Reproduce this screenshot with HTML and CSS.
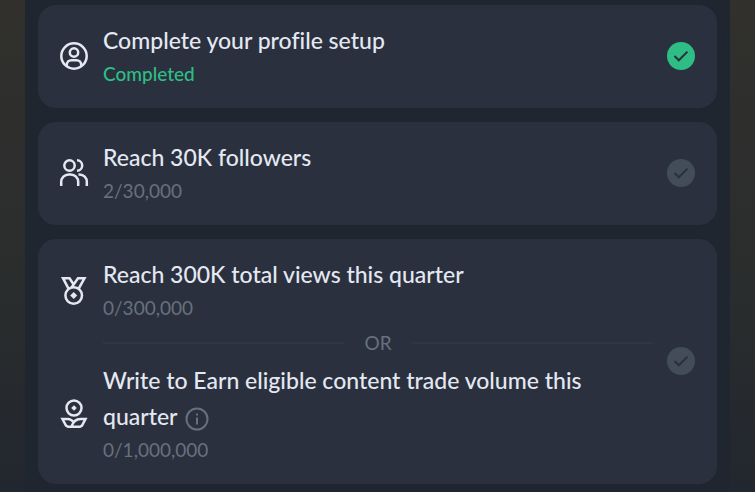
FILE: index.html
```
<!DOCTYPE html>
<html lang="en">
<head>
    <meta charset="UTF-8">
    <meta name="viewport" content="width=device-width, initial-scale=1.0">
    <title>Creator Tasks</title>
    <link rel="stylesheet" href="styles.css">
</head>
<body>
    <main class="panel">
        <section class="card">
            <div class="tasks">
                <div class="task">
                    <svg class="icon" viewBox="0 0 28 28">
                        <circle cx="14" cy="14" r="12.7"/>
                        <circle cx="14" cy="10.5" r="4.2"/>
                        <path d="M6.8 24v-1.200c0-2.800 2-4.600 4.700-4.600h5c2.700 0 4.700 1.800 4.700 4.600V24"/>
                    </svg>
                    <div class="task-text">
                        <h2>Complete your profile setup</h2>
                        <p class="completed">Completed</p>
                    </div>
                </div>
            </div>
            <svg class="check done" viewBox="0 0 28 28" role="img" aria-label="Done">
                <circle cx="14" cy="14" r="14"/>
                <path d="M7.500 14l4.300 4.300 8.700-8.700"/>
            </svg>
        </section>

        <section class="card">
            <div class="tasks">
                <div class="task">
                    <svg class="icon" viewBox="0 0 28 28">
                        <circle cx="9.500" cy="6.500" r="5.200"/>
                        <path d="M17 1.300a5.200 5.200 0 0 1 0 10.400"/>
                        <path d="M1.200 27v-4a7.500 7.500 0 0 1 7.500-7.500h2A7.500 7.500 0 0 1 18.200 23v4"/>
                        <path d="M18.500 15.500h1a7.300 7.300 0 0 1 7.300 7.500v4"/>
                    </svg>
                    <div class="task-text">
                        <h2>Reach 30K followers</h2>
                        <p>2/30,000</p>
                    </div>
                </div>
            </div>
            <svg class="check" viewBox="0 0 28 28" role="img" aria-label="Not done">
                <circle cx="14" cy="14" r="14"/>
                <path d="M7.500 14l4.300 4.300 8.700-8.700"/>
            </svg>
        </section>

        <section class="card">
            <div class="tasks">
                <div class="task">
                    <svg class="icon" viewBox="0 0 28 28">
                        <circle cx="13.700" cy="19.500" r="8.300"/>
                        <path d="M8.500 12.700L3 2.200h6.500l4.200 6.300M11.500 11.500l6.500-9.300h6.500l-5.800 10.500"/>
                        <path class="solid" d="M13.700 16l3.500 3.500-3.500 3.500-3.500-3.500z"/>
                    </svg>
                    <div class="task-text">
                        <h2>Reach 300K total views this quarter</h2>
                        <p>0/300,000</p>
                    </div>
                </div>
                <div class="divider">OR</div>
                <div class="task">
                    <svg class="icon" viewBox="0 0 28 28">
                        <circle cx="14" cy="8" r="7.500"/>
                        <path class="solid" d="M14 5.200l2.800 2.800-2.800 2.800-2.800-2.800z"/>
                        <path d="M14 23c-1.500-2.500-3.500-4-6.500-4H2.500L6 25.500l2 1.200h12l2-1.200 3.500-6.500h-5c-4.500 0-7.500 3-9 7.500"/>
                    </svg>
                    <div class="task-text">
                        <h2>
                            Write to Earn eligible content trade volume this quarter
                            <button class="info" type="button" aria-label="More information">
                                <svg viewBox="0 0 24 24">
                                    <circle cx="12" cy="12" r="10.500"/>
                                    <path d="M12 10.500v7M12 6.500v2"/>
                                </svg>
                            </button>
                        </h2>
                        <p>0/1,000,000</p>
                    </div>
                </div>
            </div>
            <svg class="check" viewBox="0 0 28 28" role="img" aria-label="Not done">
                <circle cx="14" cy="14" r="14"/>
                <path d="M7.500 14l4.300 4.300 8.700-8.700"/>
            </svg>
        </section>
    </main>
</body>
</html>
```

FILE: styles.css
```
* {
    margin: 0;
    padding: 0;
    box-sizing: border-box;
}

body {
    font-family: Lato, sans-serif;
    font-variant-ligatures: none;
    min-height: 100vh;
    padding: 0 25px;
    color: #e4e8f2;
    background: linear-gradient(#31302d, #2a2d2d 60%, #22272f);
}

.panel {
    display: flex;
    flex-direction: column;
    gap: 14px;
    min-height: 100vh;
    padding: 5px 13px 8px;
    background: #202630;
}

.card {
    display: flex;
    align-items: center;
    gap: 14px;
    padding: 17px 22px 19px;
    border-radius: 18px;
    background: #2a303d;
}

.tasks {
    flex: 1;
}

.task {
    display: flex;
    align-items: center;
    gap: 15px;
}

.task-text {
    flex: 1;
}

.task h2 {
    font-family: "Lato Medium", Lato, sans-serif;
    font-size: 23px;
    font-weight: 500;
    line-height: 36px;
}

.task p {
    font-size: 19px;
    line-height: 31px;
    color: #68707d;
}

.task .completed {
    font-family: "Lato Medium", Lato, sans-serif;
    font-weight: 500;
    color: #2ebd85;
}

.icon {
    flex-shrink: 0;
    width: 28px;
    height: 28px;
    overflow: visible;
    fill: none;
    stroke: #e4e8f2;
    stroke-width: 2.5;
}

.icon .solid {
    fill: #e4e8f2;
    stroke: none;
}

.check {
    flex-shrink: 0;
    width: 28px;
    height: 28px;
    fill: #434c59;
}

.check path {
    fill: none;
    stroke: #2a303d;
    stroke-width: 2;
}

.check.done {
    fill: #2ebd85;
}

/* "OR" with a rule on each side */
.divider {
    display: flex;
    align-items: center;
    gap: 20px;
    margin-left: 43px;
    font-size: 19px;
    line-height: 39px;
    color: #68707d;
}

.divider::before,
.divider::after {
    content: "";
    flex: 1;
    height: 2px;
    background: #303744;
}

.info {
    width: 24px;
    height: 24px;
    margin-left: 2px;
    border: none;
    background: none;
    vertical-align: middle;
    cursor: pointer;
}

.info svg {
    display: block;
    fill: none;
    stroke: #68707d;
    stroke-width: 2;
}
```
